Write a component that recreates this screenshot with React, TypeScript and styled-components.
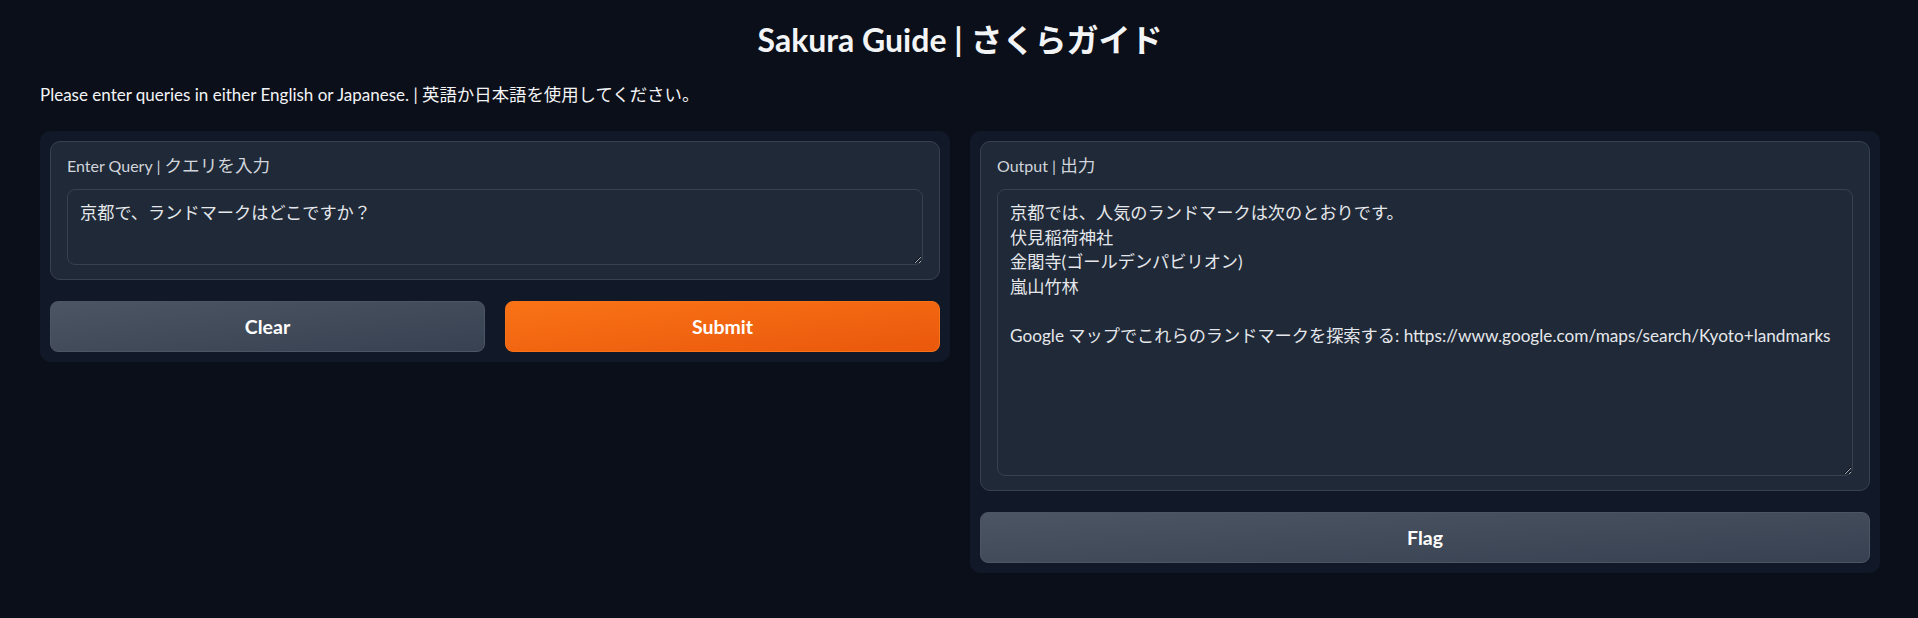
import styled, { createGlobalStyle } from "styled-components";

const GlobalStyle = createGlobalStyle`
  html, body {
    margin: 0;
    background-color: #0b0f19;
    color: #f3f4f6;
    font-family: "Lato", "Noto Sans CJK JP", sans-serif;
  }
`;

const Page = styled.div`
  padding: 20px 38px 40px 40px;
  display: flex;
  flex-direction: column;
`;

const Title = styled.h1`
  margin: 0;
  text-align: center;
  font-size: 32px;
  line-height: 40px;
  font-weight: 700;
  color: #f3f4f6;
`;

const Description = styled.p`
  margin: 22px 0 23px;
  font-size: 17px;
  line-height: 26px;
  color: #f3f4f6;
`;

// CJK glyphs in the original render a touch larger than the Latin text
const Jp = styled.span<{ $size: number }>`
  font-family: "Noto Sans CJK JP", sans-serif;
  font-size: ${(p) => p.$size}px;
  line-height: 1;
`;

const Columns = styled.div`
  display: grid;
  grid-template-columns: 1fr 1fr;
  gap: 20px;
  align-items: start;
`;

const Panel = styled.div`
  background-color: #111827;
  border-radius: 10px;
  padding: 10px;
  display: flex;
  flex-direction: column;
  gap: 21px;
`;

const Block = styled.label`
  display: flex;
  flex-direction: column;
  background-color: #1f2937;
  border: 1px solid #374151;
  border-radius: 10px;
  padding: 12px 16px 14px;
`;

const Label = styled.span`
  height: 24px;
  font-size: 16px;
  line-height: 24px;
  color: #d1d5db;
  margin-bottom: 11px;
`;

const TextArea = styled.textarea<{ $height: number }>`
  box-sizing: border-box;
  width: 100%;
  height: ${(p) => p.$height}px;
  margin: 0;
  padding: 11px 12px;
  background-color: #1f2937;
  border: 1px solid #374151;
  border-radius: 8px;
  color: #e5e7eb;
  font-family: "Lato", "Noto Sans CJK JP", sans-serif;
  font-size: 17.2px;
  line-height: 24.6px;
  resize: vertical;
  overflow: hidden;
  outline: none;
`;

const ButtonRow = styled.div`
  display: grid;
  grid-template-columns: 1fr 1fr;
  gap: 20px;
`;

const Button = styled.button<{ $primary?: boolean }>`
  height: 51px;
  border-radius: 8px;
  border: 1px solid ${(p) => (p.$primary ? "#f97316" : "#4b5563")};
  background: ${(p) =>
    p.$primary
      ? "linear-gradient(to bottom right, #f97316, #ea580c)"
      : "linear-gradient(to bottom right, #4b5563, #374151)"};
  color: #ffffff;
  font-family: "Lato", "Noto Sans CJK JP", sans-serif;
  font-size: 19.5px;
  font-weight: 700;
  cursor: pointer;
`;

const outputText = `京都では、人気のランドマークは次のとおりです。
伏見稲荷神社
金閣寺(ゴールデンパビリオン)
嵐山竹林

Google マップでこれらのランドマークを探索する: https://www.google.com/maps/search/Kyoto+landmarks`;

function App() {
  return (
    <Page>
      <GlobalStyle />
      <Title>Sakura Guide | さくらガイド</Title>
      <Description>
        Please enter queries in either English or Japanese. | <Jp $size={17.4}>英語か日本語を使用してください。</Jp>
      </Description>
      <Columns>
        <Panel>
          <Block>
            <Label>
              Enter Query | <Jp $size={17.6}>クエリを入力</Jp>
            </Label>
            <TextArea $height={76} rows={2} defaultValue="京都で、ランドマークはどこですか？" />
          </Block>
          <ButtonRow>
            <Button>Clear</Button>
            <Button $primary>Submit</Button>
          </ButtonRow>
        </Panel>
        <Panel>
          <Block>
            <Label>
              Output | <Jp $size={17.6}>出力</Jp>
            </Label>
            <TextArea $height={287} readOnly defaultValue={outputText} />
          </Block>
          <Button>Flag</Button>
        </Panel>
      </Columns>
    </Page>
  );
}

export default App;
